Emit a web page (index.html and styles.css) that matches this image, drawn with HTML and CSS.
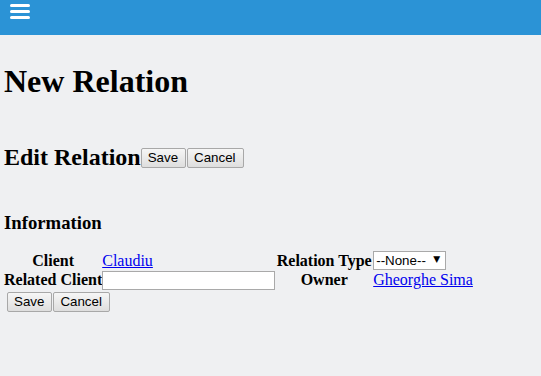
FILE: index.html
```html
<!DOCTYPE html>
<html lang="en">
<head>
<meta charset="UTF-8" />
<title>New Relation</title>
<link rel="stylesheet" href="styles.css">
</head>
<body>

<div class="topbar">
  <span class="menu-icon">
    <svg width="20" height="16" viewBox="0 0 20 16"><rect x="0" y="0" width="20" height="3" rx="1.5" fill="#fff"/><rect x="0" y="6" width="20" height="3" rx="1.5" fill="#fff"/><rect x="0" y="12" width="20" height="3" rx="1.5" fill="#fff"/></svg>
  </span>
</div>

<div class="page">
  <h1>New Relation</h1>
  <h2>Edit Relation<button>Save</button><button class="next">Cancel</button></h2>

  <h3>Information</h3>
  <table class="detail">
    <tr class="row1">
      <th class="lbl1">Client</th>
      <td class="val1"><a href="#">Claudiu</a></td>
      <th class="lbl2">Relation Type</th>
      <td>
        <span class="select-wrap">
          <select>
            <option>--None--</option>
          </select>
          <span class="arrow">&#9660;</span>
        </span>
      </td>
    </tr>
    <tr>
      <th>Related Client</th>
      <td><input type="text" class="lookup"></td>
      <th>Owner</th>
      <td><a href="#">Gheorghe Sima</a></td>
    </tr>
  </table>
  <div class="bottom-buttons">
    <button>Save</button><button class="next">Cancel</button>
  </div>
</div>

</body>
</html>
```

FILE: styles.css
```css
body {
  margin: 0;
  background: #eff0f2;
  font-family: "Liberation Serif", serif;
  font-size: 16px;
  color: #000;
}
.topbar {
  background: #2b93d6;
  height: 35px;
}
.menu-icon {
  display: inline-block;
  padding: 4px 0 0 10px;
}
.page {
  padding: 0 4px;
}
h1 {
  font-size: 32px;
  margin: 28px 0 0;
  line-height: 37px;
}
h2 {
  font-size: 24px;
  margin: 43px 0 0;
  line-height: 28px;
}
h2 button {
  vertical-align: 3px;
}
h3 {
  font-size: 18.72px;
  margin: 41px 0 0;
  line-height: 22px;
}
button {
  font-family: "Liberation Sans", sans-serif;
  font-size: 13.33px;
  padding: 1px 7px 1px 6px;
  background: linear-gradient(#f6f6f6, #dedede);
  border: 1px solid #a8a8a8;
  border-radius: 2px;
  color: #000;
  margin: 0;
  height: 20px;
}
button.next {
  margin-left: 1px;
}
.detail {
  border-collapse: collapse;
  margin-top: 16px;
}
.detail th,
.detail td {
  padding: 0;
  text-align: left;
  white-space: nowrap;
}
.detail th {
  text-align: center;
}
.row1 th,
.row1 td {
  height: 20px;
  vertical-align: bottom;
}
.lbl1 {
  width: 98px;
}
.val1 {
  width: 173px;
}
.lbl2 {
  width: 98px;
}
a {
  color: #0000ee;
}
.lookup {
  width: 167px;
  height: 15px;
  border: 1px solid #a9a9a9;
  padding: 1px 2px;
  margin: 0;
  font-size: 13.33px;
  background: #fff;
  vertical-align: middle;
}
.select-wrap {
  position: relative;
  display: inline-block;
}
select {
  appearance: none;
  -webkit-appearance: none;
  font-family: "Liberation Sans", sans-serif;
  font-size: 13.33px;
  border: 1px solid #a9a9a9;
  border-radius: 0;
  background: #fff;
  color: #000;
  width: 73px;
  height: 19px;
  padding: 0 0 0 2px;
  margin: 0;
}
.arrow {
  position: absolute;
  right: 6px;
  top: 3px;
  font-family: "DejaVu Sans", sans-serif;
  font-size: 9px;
  pointer-events: none;
}
.bottom-buttons {
  padding-left: 3px;
  margin-top: 2px;
}
```
